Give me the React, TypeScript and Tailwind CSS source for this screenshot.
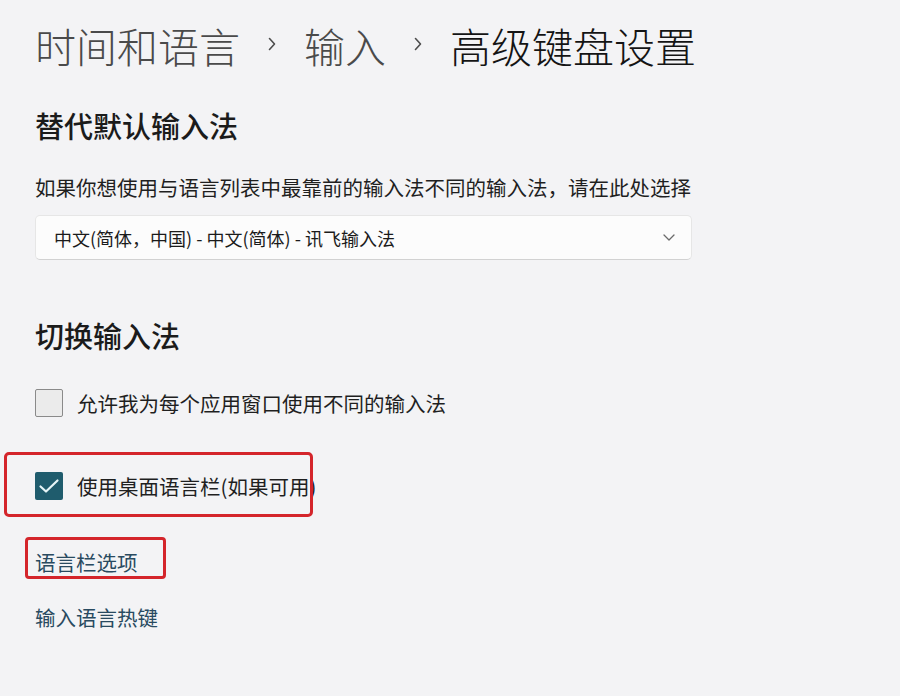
import { ReactNode } from 'react'

const font = { fontFamily: '"Noto Sans CJK SC", "Noto Sans", sans-serif' }

function Crumb() {
  return (
    <svg width="8" height="14" viewBox="0 0 8 14" className="mt-[-3px] shrink-0">
      <path d="M1.5 1.5 L6.5 7 L1.5 12.5" fill="none" stroke="#4d4d4d" strokeWidth="1.6" strokeLinecap="round" strokeLinejoin="round" />
    </svg>
  )
}

function Checkbox({ checked, children }: { checked?: boolean; children: ReactNode }) {
  return (
    <div className="flex h-[28px] items-center">
      {checked ? (
        <div className="flex h-[28px] w-[28px] items-center justify-center rounded-[2px] bg-[#1f5c6d]">
          <svg width="22" height="18" viewBox="0 0 22 18">
            <path d="M2.5 9.5 L8 14.5 L19.5 3.5" fill="none" stroke="#e6f5f7" strokeWidth="2.2" strokeLinecap="round" strokeLinejoin="round" />
          </svg>
        </div>
      ) : (
        <div className="h-[28px] w-[28px] rounded-[2px] border-[1.5px] border-[#8a8a8a] bg-[#ebebeb]" />
      )}
      <span className="ml-[14px] text-[20.5px] leading-[28px] text-[#1f1f1f]">{children}</span>
    </div>
  )
}

export default function App() {
  return (
    <div className="min-h-screen w-full bg-[#f3f3f5] pl-[35px] pt-[21px]" style={font}>
      {/* breadcrumb title */}
      <div className="flex h-[48px] items-center gap-[28px] text-[41px] font-light leading-[48px]">
        <span className="text-[#4a4a4a]">时间和语言</span>
        <Crumb />
        <span className="text-[#4a4a4a]">输入</span>
        <Crumb />
        <span className="text-[#141414]">高级键盘设置</span>
      </div>

      {/* 替代默认输入法 */}
      <h2 className="mt-[38px] h-[36px] text-[29px] font-medium leading-[36px] text-[#1b1b1b]">替代默认输入法</h2>
      <p className="mt-[30px] h-[28px] text-[20.5px] leading-[28px] text-[#1f1f1f]">
        如果你想使用与语言列表中最靠前的输入法不同的输入法，请在此处选择
      </p>
      <div className="mt-[14px] flex h-[45px] w-[657px] items-center justify-between rounded-[5px] border border-[#e6e6e6] border-b-[#d2d2d2] bg-[#fcfcfc] pl-[18px] pr-[16px]">
        <span className="text-[18px] leading-[24px] text-[#1b1b1b]">中文(简体，中国) - 中文(简体) - 讯飞输入法</span>
        <svg width="12" height="7" viewBox="0 0 12 7">
          <path d="M1 1 L6 6 L11 1" fill="none" stroke="#6a6a6a" strokeWidth="1.3" strokeLinecap="round" strokeLinejoin="round" />
        </svg>
      </div>

      {/* 切换输入法 */}
      <h2 className="mt-[57px] h-[36px] text-[29px] font-medium leading-[36px] text-[#1b1b1b]">切换输入法</h2>
      <div className="mt-[36px]">
        <Checkbox>允许我为每个应用窗口使用不同的输入法</Checkbox>
      </div>
      <div className="relative mt-[55px]">
        <Checkbox checked>使用桌面语言栏(如果可用)</Checkbox>
        <div className="pointer-events-none absolute left-[-31px] top-[-20px] h-[65px] w-[309px] rounded-[5px] border-[3px] border-[#d4252b]" />
      </div>

      <div className="relative mt-[48px] h-[28px] w-fit">
        <a className="text-[20.5px] leading-[28px] text-[#294a60]">语言栏选项</a>
        <div className="pointer-events-none absolute left-[-10px] top-[-11px] h-[42px] w-[141px] rounded-[4px] border-[3px] border-[#d4252b]" />
      </div>
      <div className="mt-[27px] h-[28px]">
        <a className="text-[20.5px] leading-[28px] text-[#294a60]">输入语言热键</a>
      </div>
    </div>
  )
}
